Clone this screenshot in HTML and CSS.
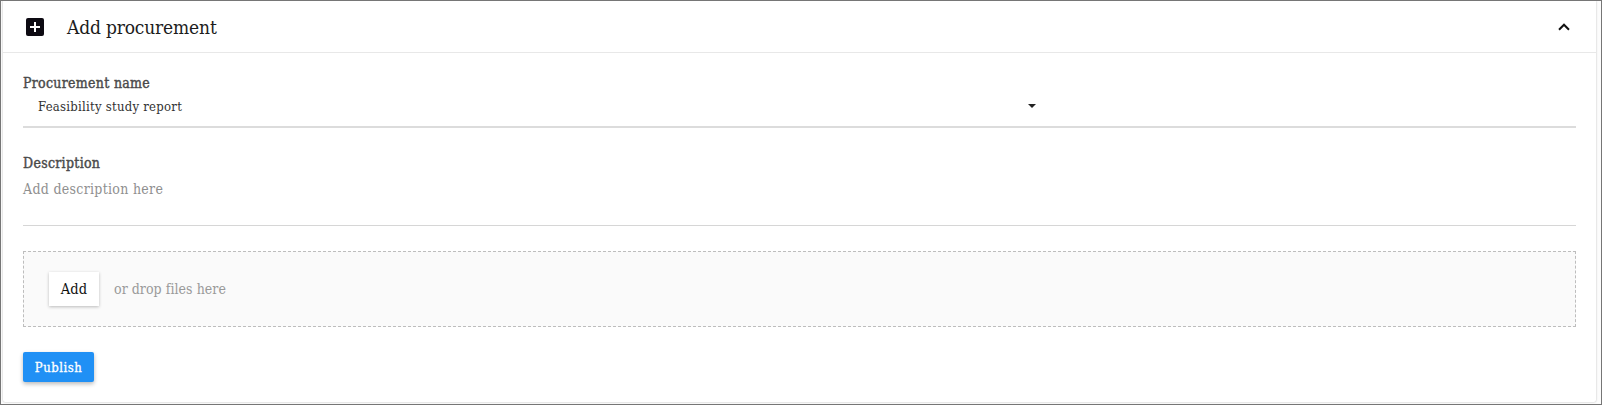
FILE: index.html
```html
<!DOCTYPE html>
<html lang="en">
<head>
<meta charset="utf-8">
<title>Add procurement</title>
<link rel="stylesheet" href="styles.css">
</head>
<body>
<main class="frame">
  <section class="card">
    <header class="card-header">
      <svg class="add-icon" viewBox="0 0 18 18" width="18" height="18"><rect width="18" height="18" rx="2" fill="#0d0a12"/><path d="M9 4v10M4 9h10" stroke="#fff" stroke-width="2"/></svg>
      <h1 class="title">Add procurement</h1>
      <svg class="chevron" viewBox="0 0 12 8" width="12" height="8"><path d="M1 6.7 6 1.7l5 5" fill="none" stroke="#111" stroke-width="2"/></svg>
    </header>
    <form class="card-body">
      <label class="label name-label">Procurement name</label>
      <div class="select">
        <span class="select-value">Feasibility study report</span>
        <svg class="caret" viewBox="0 0 8 4" width="8" height="4"><path d="M0 0h8L4 4z" fill="#222"/></svg>
      </div>
      <label class="label description-label">Description</label>
      <div class="description"><span class="placeholder">Add description here</span></div>
      <div class="dropzone">
        <button type="button" class="add-button"><span>Add</span></button>
        <span class="drop-hint">or drop files here</span>
      </div>
      <button type="button" class="publish"><span>Publish</span></button>
    </form>
  </section>
</main>
</body>
</html>
```
FILE: styles.css
```css
* { box-sizing: border-box; }
body {
  margin: 0;
  background: #fff;
  font-family: "Roboto Slab", "DejaVu Serif Condensed", "DejaVu Serif", serif;
  font-stretch: condensed;
}
button { font: inherit; border: 0; padding: 0; }
span, h1, label { white-space: nowrap; }
.frame {
  height: 405px;
  border: 1px solid #767676;
  padding: 0 5px 2px 2px;
  background: #fcfcfc;
  overflow: hidden;
}
.card {
  height: 401px;
  background: #fff;
  border-radius: 0 0 2px 2px;
  box-shadow: 0 0 2px rgba(0, 0, 0, .3);
}
.card-header {
  height: 52px;
  display: flex;
  align-items: center;
  padding: 0 26px 0 23px;
  border-bottom: 1px solid #e8e8e8;
}
.title {
  margin: 0 auto 0 23px;
  font-size: 19px;
  font-weight: 400;
  letter-spacing: -.17px;
  color: #1c1c1c;
}
.card-body {
  display: flex;
  flex-direction: column;
  align-items: stretch;
  padding: 20px 20px 0;
}
.label {
  height: 20px;
  line-height: 20px;
  font-size: 14px;
  letter-spacing: .3px;
  color: #4a4a4a;
  -webkit-text-stroke: .4px #4a4a4a;
}
.select {
  height: 35px;
  display: grid;
  grid-template-columns: 1fr 548px;
  border-bottom: 2px solid #dcdcdc;
}
.select-value {
  padding-left: 15px;
  line-height: 27px;
  font-size: 13px;
  letter-spacing: .25px;
  color: #333;
}
.caret { margin-top: 11px; }
.description-label { margin-top: 25px; }
.description {
  height: 53px;
  border-bottom: 1px solid #d6d6d6;
}
.placeholder {
  display: block;
  line-height: 32px;
  font-size: 14px;
  letter-spacing: .3px;
  color: #8f8f8f;
}
.dropzone {
  height: 76px;
  margin-top: 25px;
  padding-left: 25px;
  display: flex;
  align-items: center;
  border: 1px dashed #bdbdbd;
  background: #fafafa;
}
.add-button {
  width: 50px;
  height: 34px;
  font-size: 14.5px;
  letter-spacing: .2px;
  background: #fff;
  color: #111;
  box-shadow: 0 1px 3px rgba(0, 0, 0, .25);
}
.drop-hint {
  margin-left: 15px;
  font-size: 14px;
  letter-spacing: .05px;
  color: #999;
}
.publish {
  align-self: flex-start;
  width: 71px;
  height: 30px;
  margin-top: 25px;
  border-radius: 2px;
  font-size: 13px;
  letter-spacing: .5px;
  background: #2090f5;
  color: #fff;
  -webkit-text-stroke: .3px #fff;
  box-shadow: 0 2px 4px rgba(0, 0, 0, .28);
}
```
